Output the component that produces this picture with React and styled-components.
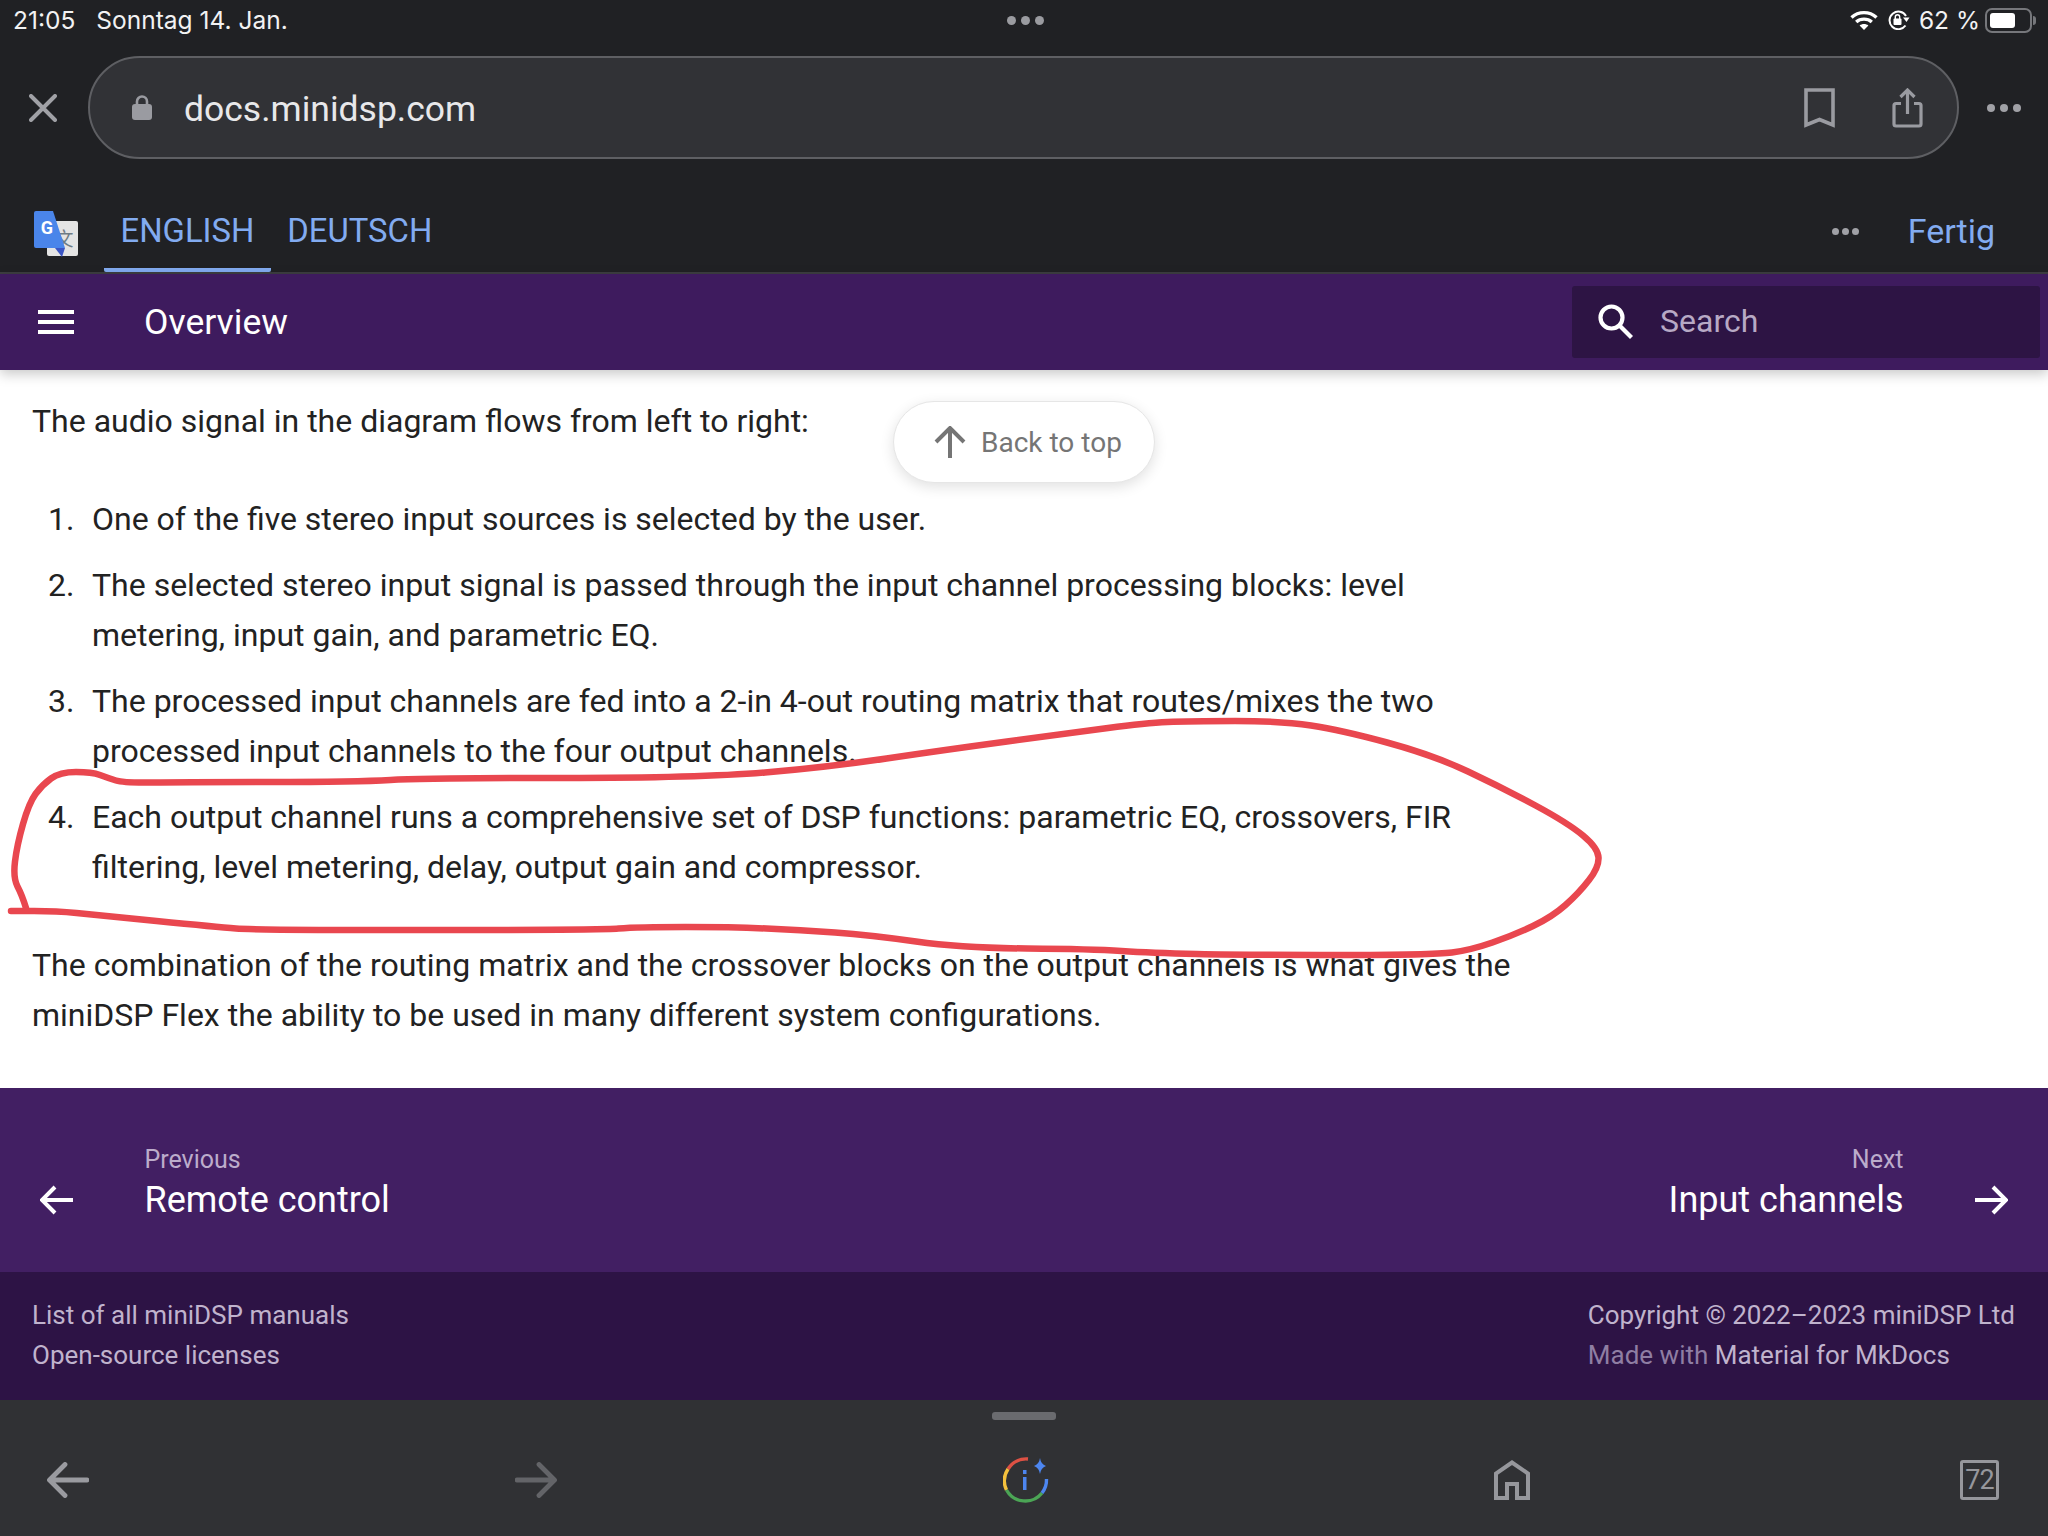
import React from 'react';
import styled, { createGlobalStyle } from 'styled-components';

const GlobalStyle = createGlobalStyle`
  html, body {
    margin: 0;
    padding: 0;
    background: #202124;
  }
  * {
    box-sizing: border-box;
  }
`;

const Page = styled.div`
  position: relative;
  width: 2048px;
  height: 1536px;
  display: flex;
  flex-direction: column;
  overflow: hidden;
  background: #202124;
  font-family: Roboto, "Liberation Sans", sans-serif;
`;

const StatusBar = styled.div`
  height: 40px;
  flex: none;
  display: grid;
  grid-template-columns: 1fr auto 1fr;
  align-items: center;
  padding: 0 10px 0 13px;
  color: #f2f2f3;
  font-family: Inter, Roboto, sans-serif;
  font-size: 24.5px;
`;

const StatusDate = styled.span`
  margin-left: 21px;
`;

const StatusDots = styled.div`
  display: flex;
  gap: 5px;
`;

const Dot = styled.i`
  display: block;
  width: ${p => p.$size}px;
  height: ${p => p.$size}px;
  border-radius: 50%;
  background: ${p => p.$color};
`;

const StatusRight = styled.div`
  display: flex;
  align-items: center;
  justify-content: flex-end;
  gap: 9px;
`;

const Battery = styled.div`
  width: 47px;
  height: 25px;
  padding: 3px;
  margin-right: 6px;
  margin-left: -4px;
  border: 2px solid #76777b;
  border-radius: 7px;
  position: relative;
  &::before {
    content: '';
    display: block;
    width: 25px;
    height: 100%;
    border-radius: 3px;
    background: #fff;
  }
  &::after {
    content: '';
    position: absolute;
    right: -6px;
    top: 6px;
    width: 3px;
    height: 9px;
    border-radius: 0 3px 3px 0;
    background: #76777b;
  }
`;

const UrlRow = styled.div`
  height: 135px;
  flex: none;
  display: flex;
  align-items: center;
  padding: 0 27px 0 29px;
`;

const UrlBar = styled.div`
  flex: 1;
  height: 103px;
  margin: 0 28px 0 31px;
  padding: 0 34px 0 42px;
  display: flex;
  align-items: center;
  background: #313236;
  border: 2px solid #5e5f63;
  border-radius: 52px;
`;

const UrlText = styled.span`
  flex: 1;
  margin-left: 32px;
  padding-top: 2px;
  color: #e8e8ea;
  font-size: 35.5px;
`;

const UrlActions = styled.div`
  display: flex;
  align-items: center;
  gap: 57px;
`;

const MoreDots = styled.div`
  display: flex;
  gap: ${p => p.$gap}px;
`;

const TranslateBar = styled.div`
  height: 99px;
  flex: none;
  display: flex;
  align-items: stretch;
  padding: 0 53px 0 34px;
  border-bottom: 2px solid #3d3e41;
`;

const TranslateLogo = styled.div`
  display: flex;
  align-items: center;
  margin-right: 26px;
  padding-top: 21px;
`;

const LangTab = styled.div`
  display: flex;
  align-items: center;
  padding: 19px 16.5px 0;
  color: #82abf0;
  font-size: 32.8px;
  border-bottom: 4px solid ${p => (p.$active ? '#82abf0' : 'transparent')};
  border-radius: 0 0 2px 2px;
`;

const TranslateRight = styled.div`
  margin-left: auto;
  display: flex;
  align-items: center;
  gap: 49px;
  padding-top: 15px;
`;

const DoneLabel = styled.span`
  color: #82abf0;
  font-size: 34px;
`;

const Header = styled.header`
  height: 96px;
  flex: none;
  display: flex;
  align-items: center;
  padding: 0 8px 0 38px;
  background: #3e1b5e;
  color: #fff;
  box-shadow: 0 4px 12px rgba(0, 0, 0, 0.22);
  z-index: 1;
`;

const HeaderTitle = styled.span`
  margin-left: 70px;
  font-size: 35.5px;
`;

const SearchBox = styled.div`
  margin-left: auto;
  width: 468px;
  height: 72px;
  display: flex;
  align-items: center;
  padding: 0 0 2px 26px;
  background: #2d1444;
  border-radius: 3px;
`;

const SearchLabel = styled.span`
  margin-left: 27px;
  color: #b7a9c5;
  font-size: 32px;
`;

const Content = styled.main`
  flex: 1;
  padding: 26px 0 0 32px;
  background: #fff;
  color: #222;
  font-size: 32px;
  line-height: 50px;
`;

const Paragraph = styled.p`
  width: 1490px;
  margin: 0;
`;

const Steps = styled.ol`
  width: 1490px;
  margin: 48px 0 48px;
  padding: 0;
  list-style: none;
  counter-reset: step;
`;

const Step = styled.li`
  display: grid;
  grid-template-columns: 60px 1fr;
  margin-bottom: 16px;
  counter-increment: step;
  &::before {
    content: counter(step) '.';
    padding-left: 16px;
  }
`;

const BackToTop = styled.div`
  position: absolute;
  left: 893px;
  top: 401px;
  width: 262px;
  height: 82px;
  display: flex;
  align-items: center;
  gap: 15px;
  padding-left: 40px;
  background: #fff;
  color: #757575;
  font-size: 28px;
  border-radius: 41px;
  border: 1px solid #e6e6e6;
  box-shadow: 0 4px 14px rgba(0, 0, 0, 0.12);
  z-index: 2;
`;

const Scribble = styled.svg`
  position: absolute;
  left: 0;
  top: 0;
  z-index: 3;
  pointer-events: none;
`;

const PageNav = styled.nav`
  height: 184px;
  flex: none;
  display: flex;
  align-items: center;
  justify-content: space-between;
  padding: 0 40px;
  background: #421f63;
  color: #fff;
`;

const NavLink = styled.div`
  display: flex;
  align-items: flex-end;
  gap: 71.5px;
  svg {
    margin-bottom: 8px;
  }
`;

const NavText = styled.div`
  display: flex;
  flex-direction: column;
  align-items: ${p => (p.$end ? 'flex-end' : 'flex-start')};
  padding-top: 6px;
`;

const NavHint = styled.span`
  color: #bcaccb;
  font-size: 25px;
  line-height: 34px;
`;

const NavTitle = styled.span`
  font-size: 36px;
  line-height: 46px;
`;

const Meta = styled.footer`
  height: 128px;
  flex: none;
  display: flex;
  justify-content: space-between;
  padding: 23px 33px 0 32px;
  background: #2d1345;
  color: #c0b3cd;
  font-size: 26px;
  line-height: 40px;
`;

const MetaDim = styled.span`
  color: #8f7ea3;
`;

const BottomBar = styled.div`
  position: relative;
  height: 136px;
  flex: none;
  display: grid;
  grid-template-columns: 468px 488px 491px 466px auto;
  align-items: center;
  padding: 24px 0 0 47px;
  background: #303134;
`;

const Handle = styled.div`
  position: absolute;
  left: 992px;
  top: 12px;
  width: 64px;
  height: 8px;
  border-radius: 3px;
  background: #6a6b6f;
`;

const TabCount = styled.div`
  width: 39px;
  height: 40px;
  display: flex;
  align-items: center;
  justify-content: center;
  border: 3.5px solid #96979c;
  border-radius: 3px;
  color: #96979c;
  font-size: 27px;
  letter-spacing: -1px;
`;

const steps = [
  'One of the five stereo input sources is selected by the user.',
  'The selected stereo input signal is passed through the input channel processing blocks: level metering, input gain, and parametric EQ.',
  'The processed input channels are fed into a 2-in 4-out routing matrix that routes/mixes the two processed input channels to the four output channels.',
  'Each output channel runs a comprehensive set of DSP functions: parametric EQ, crossovers, FIR filtering, level metering, delay, output gain and compressor.',
];

// traced from the red pen mark on the screenshot
const scribblePoints = [
  [26, 908], [22, 895], [13, 878], [17, 845], [29, 803], [42, 785], [60, 772], [92, 772], [108, 778], [124, 783],
  [182, 782], [357, 782], [424, 778], [701, 778], [829, 767], [944, 750], [1070, 733], [1146, 723],
  [1189, 721], [1281, 721], [1341, 730], [1433, 755], [1503, 788], [1568, 823], [1598, 848], [1599, 867],
  [1579, 893], [1552, 917], [1514, 935], [1471, 950], [1433, 955], [1243, 955], [1151, 953], [1092, 949],
  [962, 948], [870, 935], [800, 930], [733, 927], [638, 927], [599, 930], [255, 930], [217, 927],
  [96, 915], [57, 911], [11, 911],
];

const smoothPath = pts => {
  let d = `M${pts[0][0]} ${pts[0][1]}`;
  for (let i = 1; i < pts.length - 1; i += 1) {
    const mx = (pts[i][0] + pts[i + 1][0]) / 2;
    const my = (pts[i][1] + pts[i + 1][1]) / 2;
    d += ` Q${pts[i][0]} ${pts[i][1]} ${mx} ${my}`;
  }
  const last = pts[pts.length - 1];
  return `${d} L${last[0]} ${last[1]}`;
};

const WifiIcon = () => (
  <svg width="28" height="20" viewBox="0 0 28 20">
    <path d="M1.5 7.5C8.5 1 19.5 1 26.5 7.5" fill="none" stroke="#fff" strokeWidth="3.4" />
    <path d="M6.2 12C10.5 8.2 17.5 8.2 21.8 12" fill="none" stroke="#fff" strokeWidth="3.4" />
    <path d="M9.6 15.4L14 20L18.4 15.4C15.8 13.4 12.2 13.4 9.6 15.4Z" fill="#fff" />
  </svg>
);

const RotationLockIcon = () => (
  <svg width="23" height="20" viewBox="0 0 23 20">
    <path d="M18.5 15.5A8.8 8.8 0 1 1 19 6" fill="none" stroke="#fff" strokeWidth="2" />
    <path d="M16 7.5H22.5L19.5 12Z" fill="#fff" />
    <rect x="6.5" y="8.5" width="8" height="6.5" rx="1" fill="#fff" />
    <path d="M8.3 9V7a2.2 2.2 0 0 1 4.4 0v2" fill="none" stroke="#fff" strokeWidth="1.4" />
  </svg>
);

const CloseIcon = () => (
  <svg width="28" height="28" viewBox="0 0 28 28">
    <path d="M2 2L26 26M26 2L2 26" stroke="#a0a1a6" strokeWidth="4" strokeLinecap="round" />
  </svg>
);

const LockIcon = () => (
  <svg width="20" height="25" viewBox="0 0 20 25">
    <path d="M5 10V6.5a5 5 0 0 1 10 0V10" fill="none" stroke="#9a9ba1" strokeWidth="2.6" />
    <rect y="9" width="20" height="16" rx="3" fill="#9a9ba1" />
  </svg>
);

const BookmarkIcon = () => (
  <svg width="31" height="40" viewBox="0 0 31 40">
    <path d="M2 2H29V37L15.5 31.5L2 37Z" fill="none" stroke="#9a9ba1" strokeWidth="3.6" />
  </svg>
);

const ShareIcon = () => (
  <svg width="31" height="40" viewBox="0 0 31 40">
    <path d="M9 15.5H4A2 2 0 0 0 2 17.5V36A2 2 0 0 0 4 38H27A2 2 0 0 0 29 36V17.5A2 2 0 0 0 27 15.5H22" fill="none" stroke="#9a9ba1" strokeWidth="3.2" />
    <path d="M15.5 26V2.5M8.5 9L15.5 2L22.5 9" fill="none" stroke="#9a9ba1" strokeWidth="3.2" />
  </svg>
);

const TranslateIcon = () => (
  <svg width="44" height="46" viewBox="0 0 44 46">
    <rect x="13" y="10" width="31" height="35" rx="2" fill="#e4e4e4" />
    <text x="30" y="35" textAnchor="middle" fontSize="19" fill="#6f7c85" fontFamily="'Noto Sans CJK SC', sans-serif">文</text>
    <path d="M2 0H19L31 37H2A2 2 0 0 1 0 35V2A2 2 0 0 1 2 0Z" fill="#4a85ea" />
    <path d="M21 37H31L28 46Z" fill="#3b55c4" />
    <text x="13" y="23" textAnchor="middle" fontSize="18" fontWeight="700" fill="#fff" fontFamily="Roboto, sans-serif">G</text>
  </svg>
);

const MenuIcon = () => (
  <svg width="36" height="24" viewBox="0 0 36 24">
    <path d="M0 2H36M0 12H36M0 22H36" stroke="#fff" strokeWidth="4" />
  </svg>
);

const SearchIcon = () => (
  <svg width="35" height="35" viewBox="0 0 35 35">
    <circle cx="13.5" cy="13.5" r="11" fill="none" stroke="#fff" strokeWidth="4.2" />
    <path d="M21.5 21.5L33.5 33.5" stroke="#fff" strokeWidth="4.2" />
  </svg>
);

const ArrowUpIcon = () => (
  <svg width="32" height="32" viewBox="0 0 32 32">
    <path d="M16 32V3M2 16L16 2L30 16" fill="none" stroke="#757575" strokeWidth="4" />
  </svg>
);

const NavArrow = ({ right }) => (
  <svg width="33" height="30" viewBox="0 0 33 30">
    {right
      ? <path d="M0 15H30M18 2L31 15L18 28" fill="none" stroke="#fff" strokeWidth="4" />
      : <path d="M33 15H3M15 2L2 15L15 28" fill="none" stroke="#fff" strokeWidth="4" />}
  </svg>
);

const BackIcon = ({ color, flip }) => (
  <svg width="42" height="36" viewBox="0 0 42 36" style={flip ? { transform: 'scaleX(-1)' } : undefined}>
    <path d="M40 18H3M18 2.500L2.500 18L18 33.500" fill="none" stroke={color} strokeWidth="4.800" strokeLinecap="round" strokeLinejoin="round" />
  </svg>
);

const InfoIcon = () => (
  <svg width="46" height="46" viewBox="0 0 46 46">
    <path d="M25 2A21.5 21.5 0 0 0 5 12" fill="none" stroke="#dd5144" strokeWidth="3.4" />
    <path d="M5 12A21.5 21.5 0 0 0 3.500 33" fill="none" stroke="#f4c13d" strokeWidth="3.4" />
    <path d="M3.500 33A21.500 21.500 0 0 0 39 36" fill="none" stroke="#4ba555" strokeWidth="3.4" />
    <path d="M39 36A21.500 21.500 0 0 0 43.500 22" fill="none" stroke="#4d86f0" strokeWidth="3.4" />
    <rect x="20" y="13" width="3.500" height="4" fill="#4d86f0" />
    <rect x="20" y="20" width="3.500" height="13" fill="#4d86f0" />
    <path d="M37 1Q37.800 7 43 9Q37.800 11 37 17Q36.200 11 31 9Q36.200 7 37 1Z" fill="#4d86f0" />
  </svg>
);

const HomeIcon = () => (
  <svg width="36" height="40" viewBox="0 0 36 40">
    <path d="M2 38V13.500L18 2.500L34 13.500V38H23V24H13V38Z" fill="none" stroke="#96979c" strokeWidth="4" />
  </svg>
);

const App = () => (
  <Page>
    <GlobalStyle />

    <StatusBar>
      <div>
        <span>21:05</span>
        <StatusDate>Sonntag 14. Jan.</StatusDate>
      </div>
      <StatusDots>
        <Dot $size={9} $color="#9a9ba0" />
        <Dot $size={9} $color="#9a9ba0" />
        <Dot $size={9} $color="#9a9ba0" />
      </StatusDots>
      <StatusRight>
        <WifiIcon />
        <RotationLockIcon />
        <span>62 %</span>
        <Battery />
      </StatusRight>
    </StatusBar>

    <UrlRow>
      <CloseIcon />
      <UrlBar>
        <LockIcon />
        <UrlText>docs.minidsp.com</UrlText>
        <UrlActions>
          <BookmarkIcon />
          <ShareIcon />
        </UrlActions>
      </UrlBar>
      <MoreDots $gap={5}>
        <Dot $size={8} $color="#a0a1a6" />
        <Dot $size={8} $color="#a0a1a6" />
        <Dot $size={8} $color="#a0a1a6" />
      </MoreDots>
    </UrlRow>

    <TranslateBar>
      <TranslateLogo><TranslateIcon /></TranslateLogo>
      <LangTab $active>ENGLISH</LangTab>
      <LangTab>DEUTSCH</LangTab>
      <TranslateRight>
        <MoreDots $gap={3}>
          <Dot $size={7} $color="#a0a1a6" />
          <Dot $size={7} $color="#a0a1a6" />
          <Dot $size={7} $color="#a0a1a6" />
        </MoreDots>
        <DoneLabel>Fertig</DoneLabel>
      </TranslateRight>
    </TranslateBar>

    <Header>
      <MenuIcon />
      <HeaderTitle>Overview</HeaderTitle>
      <SearchBox>
        <SearchIcon />
        <SearchLabel>Search</SearchLabel>
      </SearchBox>
    </Header>

    <Content>
      <Paragraph>The audio signal in the diagram flows from left to right:</Paragraph>
      <Steps>
        {steps.map(text => <Step key={text}><span>{text}</span></Step>)}
      </Steps>
      <Paragraph>
        The combination of the routing matrix and the crossover blocks on the output channels is what gives the miniDSP Flex the ability to be used in many different system configurations.
      </Paragraph>
    </Content>

    <BackToTop>
      <ArrowUpIcon />
      <span>Back to top</span>
    </BackToTop>

    <PageNav>
      <NavLink>
        <NavArrow />
        <NavText>
          <NavHint>Previous</NavHint>
          <NavTitle>Remote control</NavTitle>
        </NavText>
      </NavLink>
      <NavLink>
        <NavText $end>
          <NavHint>Next</NavHint>
          <NavTitle>Input channels</NavTitle>
        </NavText>
        <NavArrow right />
      </NavLink>
    </PageNav>

    <Meta>
      <div>
        <div>List of all miniDSP manuals</div>
        <div>Open-source licenses</div>
      </div>
      <div>
        <div>Copyright © 2022–2023 miniDSP Ltd</div>
        <div><MetaDim>Made with</MetaDim> Material for MkDocs</div>
      </div>
    </Meta>

    <BottomBar>
      <Handle />
      <BackIcon color="#9a9ba0" />
      <BackIcon color="#636468" flip />
      <InfoIcon />
      <HomeIcon />
      <TabCount>72</TabCount>
    </BottomBar>

    <Scribble width="2048" height="1536" viewBox="0 0 2048 1536">
      <path d={smoothPath(scribblePoints)} fill="none" stroke="#e9474f" strokeWidth="6.5" strokeLinecap="round" strokeLinejoin="round" />
    </Scribble>
  </Page>
);

export default App;
